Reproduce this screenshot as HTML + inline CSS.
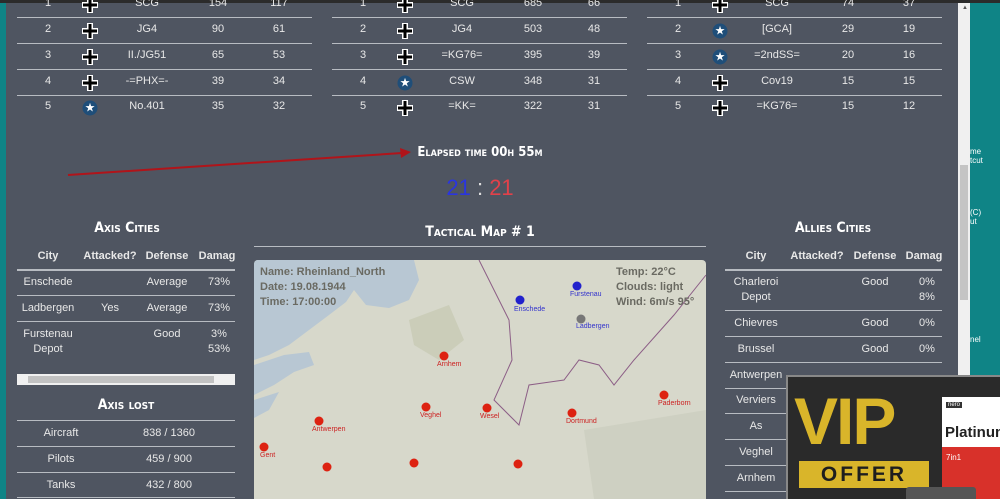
<!DOCTYPE html>
<html><head><meta charset="utf-8"><style>
*{margin:0;padding:0;box-sizing:border-box}
html,body{width:1000px;height:499px;overflow:hidden}
body{background:#0f8486;position:relative;font-family:"Liberation Sans",sans-serif;}
.pg{position:absolute;left:6px;top:0;width:952px;height:499px;background:#4f5561;}
.a{position:absolute;color:#e8e8e8;font-size:11px;white-space:nowrap}
.c{transform:translateX(-50%)}
.ln{position:absolute;height:1px;background:#b8bcc2}
.h{position:absolute;color:#fff;font-family:"DejaVu Sans Condensed","Liberation Sans Narrow",sans-serif;font-weight:bold;font-variant:small-caps;font-size:14px;transform:translateX(-50%);white-space:nowrap}
.cr{position:absolute;width:16px;height:16px;transform:translate(-50%,-50%)}
.st{position:absolute;width:15px;height:15px;border-radius:50%;background:#1f4e79;color:#fff;font-size:12px;line-height:15px;text-align:center;transform:translate(-50%,-50%)}
.m{position:absolute;width:9px;height:9px;border-radius:50%;background:#d21;transform:translate(-50%,-50%)}
.ml{position:absolute;font-size:7px;color:#c22}
</style></head><body>
<div class="pg"></div>
<div style="position:absolute;left:0;top:0;width:1000px;height:3px;background:#2b2b2b"></div>
<div style="position:absolute;left:958px;top:3px;width:12px;height:496px;background:#f0f0f0"></div>
<div style="position:absolute;left:960px;top:165px;width:8px;height:135px;background:#c4c4c4"></div>
<div class="a" style="left:962px;top:5px;font-size:6px;color:#555">▲</div>
<div class="a" style="left:970px;top:147px;font-size:8px;color:#fff">me<br>tcut</div>
<div class="a" style="left:970px;top:208px;font-size:8px;color:#fff">(C)<br>ut</div>
<div class="a" style="left:970px;top:335px;font-size:8px;color:#fff">nel</div>

<div id="tt"></div>
<script>
var T=[[17,[["1","c","SCG","154","117"],["2","c","JG4","90","61"],["3","c","II./JG51","65","53"],["4","c","-=PHX=-","39","34"],["5","s","No.401","35","32"]]],
[332,[["1","c","SCG","685","66"],["2","c","JG4","503","48"],["3","c","=KG76=","395","39"],["4","s","CSW","348","31"],["5","c","=KK=","322","31"]]],
[647,[["1","c","SCG","74","37"],["2","s","[GCA]","29","19"],["3","s","=2ndSS=","20","16"],["4","c","Cov19","15","15"],["5","c","=KG76=","15","12"]]]];
var cr='<svg width="16" height="16" viewBox="0 0 16 16"><path d="M5 0H11V5H16V11H11V16H5V11H0V5H5Z" fill="#fff"/><path d="M6.5 1H9.5V6.5H15V9.5H9.5V15H6.5V9.5H1V6.5H6.5Z" fill="#000"/></svg>';
var h="";var ys=[4,30,56,82,107];var xs=[31,73,130,201,262];
T.forEach(function(t){var x0=t[0];for(var i=0;i<4;i++)h+='<div class="ln" style="left:'+x0+'px;top:'+(17+i*26)+'px;width:295px"></div>';
t[1].forEach(function(r,i){var y=ys[i];for(var j=0;j<5;j++){if(j==1){h+=r[1]=="c"?'<div class="cr" style="left:'+(x0+xs[1])+'px;top:'+(y+1)+'px">'+cr+'</div>':'<div class="st" style="left:'+(x0+xs[1])+'px;top:'+(y+1)+'px">★</div>';}else h+='<div class="a c" style="left:'+(x0+xs[j])+'px;top:'+(y-7)+'px">'+r[j]+'</div>';}});});
document.getElementById("tt").innerHTML=h;
</script>

<svg style="position:absolute;left:0;top:0" width="1000" height="499"><line x1="68" y1="175" x2="402" y2="153" stroke="#b0141a" stroke-width="2"/><polygon points="411,152 400,148 401,158" fill="#b0141a"/></svg>
<div class="h" style="left:480px;top:145px;font-size:13px">Elapsed time 00h 55m</div>
<div class="a c" style="left:480px;top:175px;font-size:22px"><span style="color:#2a35e0">21</span> <span style="color:#ddd">:</span> <span style="color:#e2414a">21</span></div>

<div class="h" style="left:127px;top:220px">Axis Cities</div>
<div class="a c" style="left:48px;top:250px;font-weight:bold">City</div>
<div class="a c" style="left:110px;top:250px;font-weight:bold">Attacked?</div>
<div class="a c" style="left:167px;top:250px;font-weight:bold">Defense</div>
<div class="a c" style="left:217px;top:250px;font-weight:bold">Damag</div>
<div class="ln" style="left:17px;top:269px;width:218px;height:2px"></div>
<div class="a c" style="left:48px;top:276px">Enschede</div><div class="a c" style="left:167px;top:276px">Average</div><div class="a c" style="left:219px;top:276px">73%</div>
<div class="ln" style="left:17px;top:295px;width:218px"></div>
<div class="a c" style="left:48px;top:302px">Ladbergen</div><div class="a c" style="left:110px;top:302px">Yes</div><div class="a c" style="left:167px;top:302px">Average</div><div class="a c" style="left:219px;top:302px">73%</div>
<div class="ln" style="left:17px;top:321px;width:218px"></div>
<div class="a c" style="left:48px;top:328px">Furstenau</div><div class="a c" style="left:167px;top:328px">Good</div><div class="a c" style="left:219px;top:328px">3%</div>
<div class="a c" style="left:48px;top:343px">Depot</div><div class="a c" style="left:219px;top:343px">53%</div>
<div style="position:absolute;left:17px;top:374px;width:218px;height:11px;background:#f0f0f0"></div>
<div style="position:absolute;left:28px;top:376px;width:186px;height:7px;background:#c2c2c2"></div>
<div class="h" style="left:126px;top:397px">Axis lost</div>
<div class="ln" style="left:17px;top:420px;width:218px"></div>
<div class="a c" style="left:61px;top:427px">Aircraft</div><div class="a c" style="left:169px;top:427px">838 / 1360</div>
<div class="ln" style="left:17px;top:446px;width:218px"></div>
<div class="a c" style="left:61px;top:453px">Pilots</div><div class="a c" style="left:169px;top:453px">459 / 900</div>
<div class="ln" style="left:17px;top:472px;width:218px"></div>
<div class="a c" style="left:61px;top:479px">Tanks</div><div class="a c" style="left:169px;top:479px">432 / 800</div>
<div class="ln" style="left:17px;top:497px;width:218px"></div>

<div class="h" style="left:480px;top:224px">Tactical Map # 1</div>
<div class="ln" style="left:254px;top:246px;width:452px"></div>
<div style="position:absolute;left:254px;top:260px;width:452px;height:239px;background:#d7d8cb;border-radius:4px 4px 0 0;overflow:hidden">
<svg width="452" height="239" style="position:absolute;left:0;top:0">
<path d="M0 0 H160 L165 20 L155 40 L135 48 L112 45 L100 30 L92 42 L75 55 L55 70 L35 85 L15 95 L0 100Z" fill="#b8c7d3"/>
<path d="M0 105 L30 95 L55 92 L60 105 L40 112 L20 125 L0 135Z" fill="#b8c7d3"/>
<path d="M0 140 L25 132 L15 150 L0 158Z" fill="#b8c7d3"/>
<path d="M155 60 L195 45 L210 80 L185 100 L160 85Z" fill="#c6c9b0" opacity=".7"/>
<path d="M330 170 L452 150 L452 239 L340 239Z" fill="#cbcdbd" opacity=".7"/>
<path d="M225 0 L240 30 L255 60 L258 100 L240 140 L265 165 L275 125 L310 120 L325 100 L345 105 L360 125 L380 100 L420 55 L452 15" fill="none" stroke="#8c5e86" stroke-width="1"/>
</svg>
<div style="position:absolute;left:6px;top:5px;font-size:11px;font-weight:bold;color:#6a6a62;line-height:15px">Name: Rheinland_North<br>Date: 19.08.1944<br>Time: 17:00:00</div>
<div style="position:absolute;left:362px;top:5px;font-size:11px;font-weight:bold;color:#6a6a62;line-height:15px">Temp: 22°C<br>Clouds: light<br>Wind: 6m/s 95°</div>
<div class="m" style="left:323px;top:26px;background:#2222cc"></div><div class="ml" style="left:316px;top:31px;color:#33c">Furstenau</div>
<div class="m" style="left:266px;top:40px;background:#2222cc"></div><div class="ml" style="left:260px;top:46px;color:#33c">Enschede</div>
<div class="m" style="left:327px;top:59px;background:#777"></div><div class="ml" style="left:322px;top:63px;color:#33c">Ladbergen</div>
<div class="m" style="left:190px;top:96px"></div><div class="ml" style="left:183px;top:101px">Arnhem</div>
<div class="m" style="left:172px;top:147px"></div><div class="ml" style="left:166px;top:152px">Veghel</div>
<div class="m" style="left:233px;top:148px"></div><div class="ml" style="left:226px;top:153px">Wesel</div>
<div class="m" style="left:318px;top:153px"></div><div class="ml" style="left:312px;top:158px">Dortmund</div>
<div class="m" style="left:410px;top:135px"></div><div class="ml" style="left:404px;top:140px">Paderborn</div>
<div class="m" style="left:65px;top:161px"></div><div class="ml" style="left:58px;top:166px">Antwerpen</div>
<div class="m" style="left:10px;top:187px"></div><div class="ml" style="left:6px;top:192px">Gent</div>
<div class="m" style="left:73px;top:207px"></div>
<div class="m" style="left:160px;top:203px"></div>
<div class="m" style="left:264px;top:204px"></div>
</div>

<div class="h" style="left:833px;top:220px">Allies Cities</div>
<div class="a c" style="left:756px;top:250px;font-weight:bold">City</div>
<div class="a c" style="left:817px;top:250px;font-weight:bold">Attacked?</div>
<div class="a c" style="left:875px;top:250px;font-weight:bold">Defense</div>
<div class="a c" style="left:924px;top:250px;font-weight:bold">Damag</div>
<div class="ln" style="left:725px;top:269px;width:217px;height:2px"></div>
<div class="a c" style="left:756px;top:276px">Charleroi</div><div class="a c" style="left:875px;top:276px">Good</div><div class="a c" style="left:927px;top:276px">0%</div>
<div class="a c" style="left:756px;top:291px">Depot</div><div class="a c" style="left:927px;top:291px">8%</div>
<div class="ln" style="left:725px;top:310px;width:217px"></div>
<div class="a c" style="left:756px;top:317px">Chievres</div><div class="a c" style="left:875px;top:317px">Good</div><div class="a c" style="left:927px;top:317px">0%</div>
<div class="ln" style="left:725px;top:336px;width:217px"></div>
<div class="a c" style="left:756px;top:343px">Brussel</div><div class="a c" style="left:875px;top:343px">Good</div><div class="a c" style="left:927px;top:343px">0%</div>
<div class="ln" style="left:725px;top:362px;width:217px"></div>
<div class="a c" style="left:756px;top:369px">Antwerpen</div>
<div class="ln" style="left:725px;top:388px;width:217px"></div>
<div class="a c" style="left:756px;top:394px">Verviers</div>
<div class="ln" style="left:725px;top:413px;width:217px"></div>
<div class="a c" style="left:756px;top:420px">As</div>
<div class="ln" style="left:725px;top:439px;width:217px"></div>
<div class="a c" style="left:756px;top:446px">Veghel</div>
<div class="ln" style="left:725px;top:465px;width:217px"></div>
<div class="a c" style="left:756px;top:472px">Arnhem</div>
<div class="ln" style="left:725px;top:491px;width:217px"></div>

<div style="position:absolute;left:786px;top:375px;width:214px;height:124px;background:#2a2a2a;border-top:2px solid #888;border-left:2px solid #888;overflow:hidden">
<div style="position:absolute;left:6px;top:14px;font-size:66px;line-height:60px;font-weight:bold;color:#d9b52a;letter-spacing:-2px">VIP</div>
<div style="position:absolute;left:11px;top:84px;width:130px;height:27px;background:#d9b52a;color:#1e1e1e;font-weight:bold;font-size:21px;line-height:27px;text-align:center;letter-spacing:3px">OFFER</div>
<div style="position:absolute;left:154px;top:20px;width:60px;height:104px;background:#fff">
<div style="position:absolute;left:4px;top:5px;background:#333;color:#fff;font-size:6px;padding:0 2px">nero</div>
<div style="position:absolute;left:3px;top:27px;font-size:15px;font-weight:bold;color:#222">Platinum</div>
<div style="position:absolute;left:0;top:50px;width:60px;height:54px;background:#d8312a"><div style="color:#fff;font-size:8px;margin:6px 0 0 4px">7in1</div></div>
</div>
<div style="position:absolute;left:118px;top:110px;width:70px;height:20px;background:#555;border-radius:3px"></div>
</div>
</body></html>
